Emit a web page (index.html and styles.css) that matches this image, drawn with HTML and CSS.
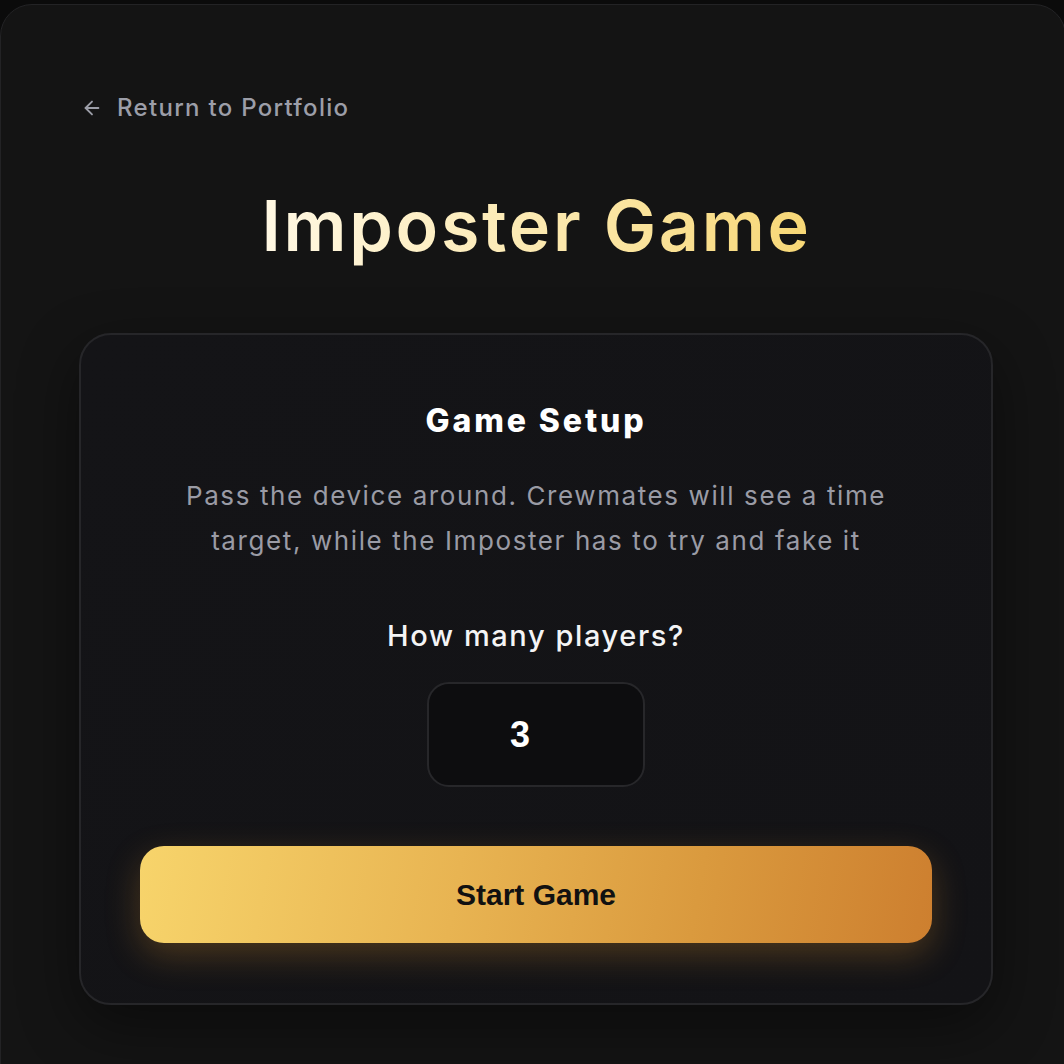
FILE: index.html
```html
<!DOCTYPE html>
<html lang="en">
<head>
<meta charset="utf-8">
<title>Imposter Game</title>
<link rel="stylesheet" href="styles.css">
</head>
<body>
<div class="page">
  <a class="back" href="#">
    <svg class="back-icon" viewBox="0 0 24 24" width="22" height="22" fill="none" stroke="currentColor" stroke-width="2" stroke-linecap="round" stroke-linejoin="round"><path d="M19 12H5"/><path d="M12 19l-7-7 7-7"/></svg>
    <span>Return to Portfolio</span>
  </a>
  <h1 class="title">Imposter Game</h1>
  <section class="card">
    <h2 class="card-title">Game Setup</h2>
    <p class="desc">Pass the device around. Crewmates will see a time target, while the Imposter has to try and fake it</p>
    <label class="label" for="players">How many players?</label>
    <input class="players" id="players" type="text" value="3">
    <button class="start">Start Game</button>
  </section>
</div>
</body>
</html>
```
FILE: styles.css
```css
html, body {
  margin: 0;
  padding: 0;
  background: #0b0b0b;
}
body {
  font-family: Inter, "Noto Sans", sans-serif;
  overflow: hidden;
}
.page {
  margin-top: 4px;
  width: 1066px;
  min-height: 1100px;
  box-sizing: border-box;
  border: 1px solid #232325;
  border-radius: 32px;
  background: #141414;
  padding: 88px 71px 0 78px;
}
.back {
  display: inline-flex;
  align-items: center;
  gap: 14px;
  margin-left: 2px;
  color: #9c9ea8;
  text-decoration: none;
  font-size: 24px;
  font-weight: 500;
  letter-spacing: 1.3px;
  line-height: 30px;
}
.back-icon {
  width: 22px;
  height: 22px;
}
.title {
  margin: 58px auto 0;
  text-align: center;
  font-size: 70px;
  font-weight: 600;
  line-height: 90px;
  letter-spacing: 2.7px;
  background: linear-gradient(90deg, #fff8e4 0%, #fbe6a6 60%, #f7d775 100%);
  -webkit-background-clip: text;
  background-clip: text;
  color: transparent;
  width: max-content;
}
.card {
  margin-top: 62px;
  width: 914px;
  box-sizing: border-box;
  border: 2px solid #262629;
  border-radius: 32px;
  background: linear-gradient(135deg, #141417 0%, #131316 100%);
  box-shadow: 0 20px 60px rgba(0,0,0,0.45);
  padding: 66px 60px 60px;
  display: flex;
  flex-direction: column;
  align-items: center;
}
.card-title {
  margin: 0;
  color: #ffffff;
  font-size: 32px;
  font-weight: 800;
  line-height: 40px;
  letter-spacing: 2.9px;
}
.desc {
  margin: 32px 0 0;
  color: #9a9ba5;
  font-size: 26px;
  font-weight: 400;
  line-height: 45px;
  letter-spacing: 1.6px;
  text-align: center;
  max-width: 730px;
}
.label {
  margin-top: 55px;
  color: #f4f4f5;
  font-size: 29px;
  font-weight: 500;
  line-height: 36px;
  letter-spacing: 1.6px;
}
.players {
  margin-top: 28px;
  width: 218px;
  height: 105px;
  box-sizing: border-box;
  border: 2px solid #27272a;
  border-radius: 22px;
  background: #0d0d0f;
  color: #ffffff;
  text-align: center;
  padding: 0 32px 0 0;
  font-family: "Liberation Sans", Arial, sans-serif;
  font-weight: 700;
  font-size: 36px;
  outline: none;
}
.start {
  margin-top: 59px;
  width: 792px;
  height: 97px;
  border: none;
  border-radius: 24px;
  background: linear-gradient(100deg, #f7d46b 0%, #e8b452 40%, #da9a3e 70%, #cd7f2f 100%);
  box-shadow: 0 12px 34px rgba(240, 160, 50, 0.25);
  color: #111111;
  font-family: "Liberation Sans", Arial, sans-serif;
  font-weight: 700;
  font-size: 30px;
  cursor: pointer;
}
```
